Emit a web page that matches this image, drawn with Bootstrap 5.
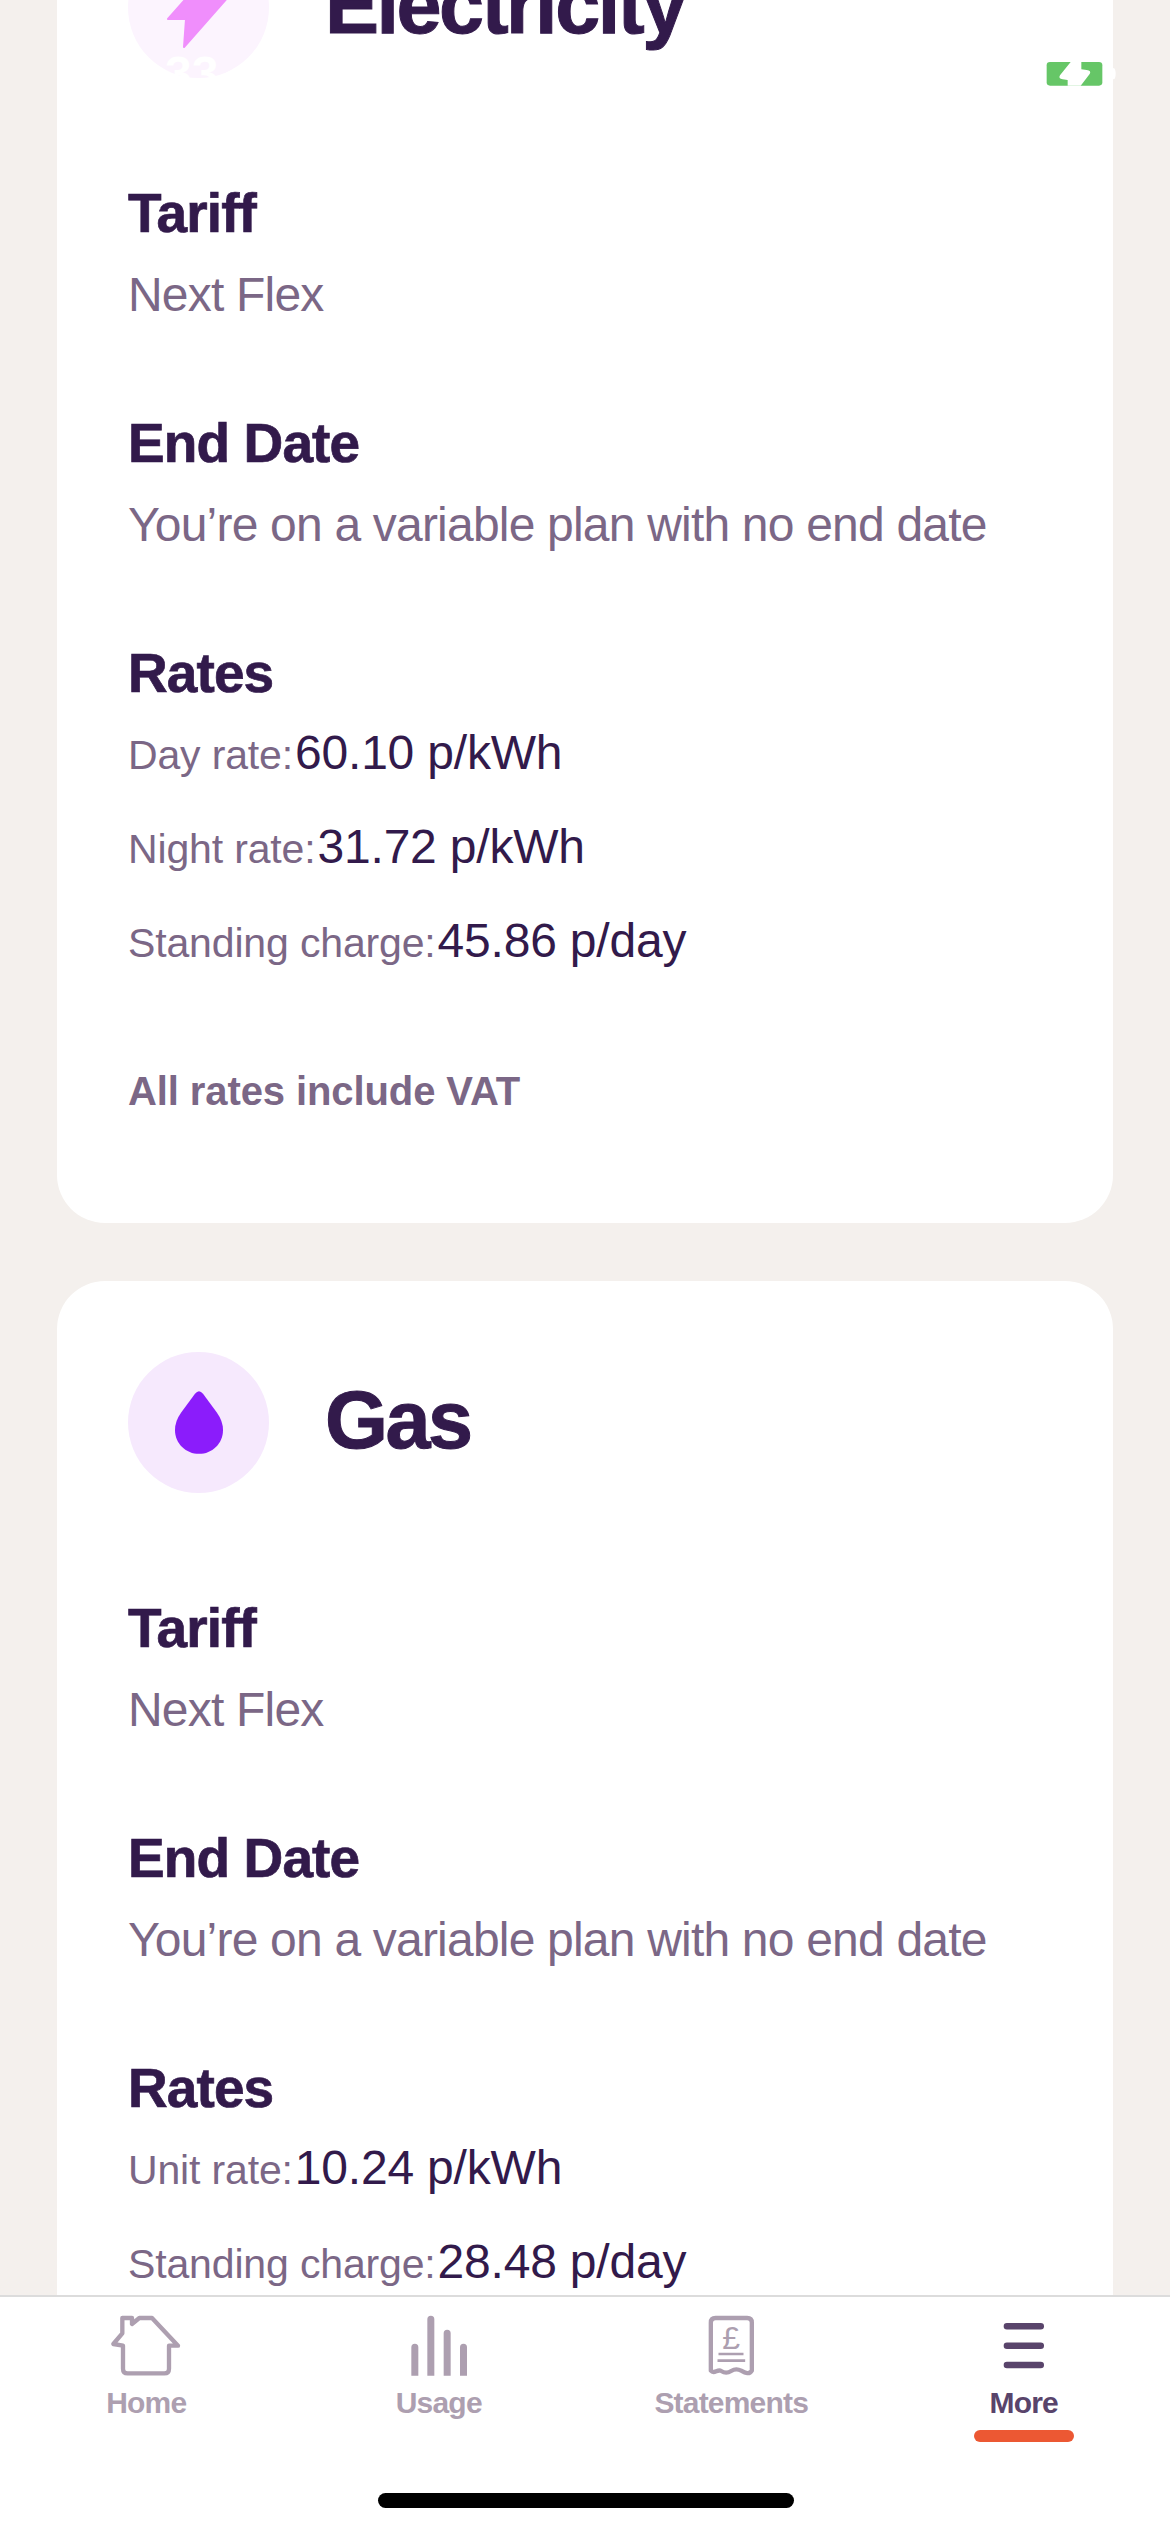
<!doctype html>
<html lang="en">
<head>
<meta charset="utf-8">
<title>Tariffs</title>
<link href="https://cdn.jsdelivr.net/npm/bootstrap@5.3.0/dist/css/bootstrap.min.css" rel="stylesheet">
<style>
html,body{height:100%}
body{width:1170px;height:2532px;overflow:hidden;background:#f4f0ed;font-family:"Liberation Sans",Arial,sans-serif;color:#321a4b;position:relative}
.scroll-area{flex:1 1 auto;min-height:0;overflow:hidden;padding:0 57px}
.scroll-inner{margin-top:-134px;display:flex;flex-direction:column;gap:58px}
.tariff-card{border:0;border-radius:48px;background:#fff;padding:71px 71px 102px}
.fuel-head{display:flex;align-items:center;gap:56px;margin-bottom:105px}
.fuel-disc{width:141px;height:141px;border-radius:50%;flex:none}
.disc-elec{background:#fcf4fe}
.disc-gas{background:#f6e9fd}
.fuel-title{font-size:81px;line-height:90px;font-weight:700;letter-spacing:-2.5px;margin:0 0 6px;color:#321a4b;-webkit-text-stroke:1px #321a4b}
.info-block{margin-bottom:88px}
.info-head{font-size:55px;line-height:60px;font-weight:700;letter-spacing:-.9px;margin:0;color:#321a4b;-webkit-text-stroke:.7px #321a4b}
.info-text{font-size:48px;line-height:60px;letter-spacing:-.8px;margin:22px 0 0;color:#7b6786}
.rate-list{margin-top:20px;display:flex;flex-direction:column;gap:34px}
.rate-row{display:flex;align-items:baseline;height:60px;line-height:60px}
.rate-name{font-size:41px;color:#7b6786;letter-spacing:-.15px}
.rate-value{font-size:48px;color:#321a4b;letter-spacing:-.2px;margin-left:2px}
.vat-note{font-size:40px;line-height:60px;font-weight:700;color:#7b6786;margin:2px 0 0;letter-spacing:-.1px}
.tab-bar{flex:none;height:237px;background:#fff;border-top:2px solid #dcdcdc;position:relative}
.tab-item{display:flex;flex-direction:column;align-items:center;padding-top:17px}
.tab-icon{height:64px;display:block}
.tab-label{font-size:30px;line-height:36px;font-weight:700;letter-spacing:-.8px;color:#ad9fb0;margin-top:7px}
.tab-on .tab-label{color:#59446b}
.tab-marker{width:100px;height:12px;border-radius:6px;background:#ec5833;margin-top:9px}
.home-pill{position:absolute;left:378px;top:196px;width:416px;height:15px;border-radius:8px;background:#000}
.status-digits{position:absolute;left:165px;top:46px;font-size:48px;line-height:56px;font-weight:700;color:#fff}
.status-batt{position:absolute;left:1044px;top:60px;width:73px;height:28px}
</style>
</head>
<body class="d-flex flex-column">
<main class="scroll-area">
  <div class="scroll-inner">
    <section class="card tariff-card">
      <div class="fuel-head">
        <div class="fuel-disc disc-elec d-flex align-items-center justify-content-center">
          <svg width="63" height="81" viewBox="167 -33 63 81" aria-hidden="true"><polygon points="213,-32 168,19 186,19 184,47 229,-4 211,-4" fill="#f08efc" stroke="#f08efc" stroke-width="2" stroke-linejoin="round"/></svg>
        </div>
        <h2 class="fuel-title">Electricity</h2>
      </div>
      <div class="info-block"><h3 class="info-head">Tariff</h3><p class="info-text">Next Flex</p></div>
      <div class="info-block"><h3 class="info-head">End Date</h3><p class="info-text">You’re on a variable plan with no end date</p></div>
      <div class="info-block"><h3 class="info-head">Rates</h3>
        <div class="rate-list">
          <div class="rate-row"><span class="rate-name">Day rate:</span><span class="rate-value">60.10 p/kWh</span></div>
          <div class="rate-row"><span class="rate-name">Night rate:</span><span class="rate-value">31.72 p/kWh</span></div>
          <div class="rate-row"><span class="rate-name">Standing charge:</span><span class="rate-value">45.86 p/day</span></div>
        </div>
      </div>
      <p class="vat-note">All rates include VAT</p>
    </section>
    <section class="card tariff-card">
      <div class="fuel-head">
        <div class="fuel-disc disc-gas d-flex align-items-center justify-content-center">
          <svg width="48" height="63" viewBox="219 210 144 188" aria-hidden="true"><path d="M291 210Q297 210 303 218L345 275Q363 300 363 327C363 367 330 398 291 398C252 398 219 367 219 327Q219 300 237 275L279 218Q285 210 291 210Z" fill="#8b1cfb"/></svg>
        </div>
        <h2 class="fuel-title">Gas</h2>
      </div>
      <div class="info-block"><h3 class="info-head">Tariff</h3><p class="info-text">Next Flex</p></div>
      <div class="info-block"><h3 class="info-head">End Date</h3><p class="info-text">You’re on a variable plan with no end date</p></div>
      <div class="info-block"><h3 class="info-head">Rates</h3>
        <div class="rate-list">
          <div class="rate-row"><span class="rate-name">Unit rate:</span><span class="rate-value">10.24 p/kWh</span></div>
          <div class="rate-row"><span class="rate-name">Standing charge:</span><span class="rate-value">28.48 p/day</span></div>
        </div>
      </div>
    </section>
  </div>
</main>
<nav class="tab-bar">
  <div class="row g-0">
    <div class="col-3"><div class="tab-item">
      <svg class="tab-icon" width="72" height="64" viewBox="90 70 216 192" aria-hidden="true"><path d="M129 165V234Q129 248 143 248H253Q267 248 267 234V165H294L216 82H178L156 100V82H127V128L100 160Z" fill="none" stroke="#ad9fb0" stroke-width="13" stroke-linejoin="round"/></svg>
      <span class="tab-label">Home</span></div></div>
    <div class="col-3"><div class="tab-item">
      <svg class="tab-icon" width="60" height="64" viewBox="987 70 180 192" aria-hidden="true"><path d="M994 255V170a10.500 10.500 0 0 1 21 0V255ZM1042 255V86a10.500 10.500 0 0 1 21 0V255ZM1091 255V128a10.500 10.500 0 0 1 21 0V255ZM1140 255V170a10.500 10.500 0 0 1 21 0V255Z" fill="#ad9fb0"/></svg>
      <span class="tab-label">Usage</span></div></div>
    <div class="col-3"><div class="tab-item">
      <svg class="tab-icon" width="51" height="64" viewBox="198 70 152 192" aria-hidden="true"><path d="M212 240V96Q212 82 226 82H321Q335 82 335 96V240C328 252 316 248 303 240C292 234 284 234 273 241C262 248 254 248 243 241C232 234 222 252 212 240Z" fill="none" stroke="#ad9fb0" stroke-width="13" stroke-linejoin="round"/><text x="273" y="174" text-anchor="middle" font-family="Liberation Sans" font-size="96" fill="#ad9fb0">£</text><path d="M235 190H310M232 210H315" stroke="#ad9fb0" stroke-width="8"/></svg>
      <span class="tab-label">Statements</span></div></div>
    <div class="col-3"><div class="tab-item tab-on">
      <svg class="tab-icon" width="42" height="64" viewBox="1088 70 128 192" aria-hidden="true"><path d="M1100 106H1203M1100 165H1203M1100 224H1203" stroke="#59446b" stroke-width="20" stroke-linecap="round"/></svg>
      <span class="tab-label">More</span><div class="tab-marker"></div></div></div>
  </div>
  <div class="home-pill"></div>
</nav>
<div class="status-digits">33</div>
<svg class="status-batt" viewBox="70 60 219 84" aria-hidden="true"><rect x="78" y="66" width="167" height="71" rx="10" fill="#66c667"/><path d="M150 66L118 106Q112 116 126 118L141 120V137H180L207 102Q213 92 198 90L182 88V66Z" fill="#fff"/><ellipse cx="279" cy="101" rx="6" ry="17" fill="#fff"/></svg>
</body>
</html>
